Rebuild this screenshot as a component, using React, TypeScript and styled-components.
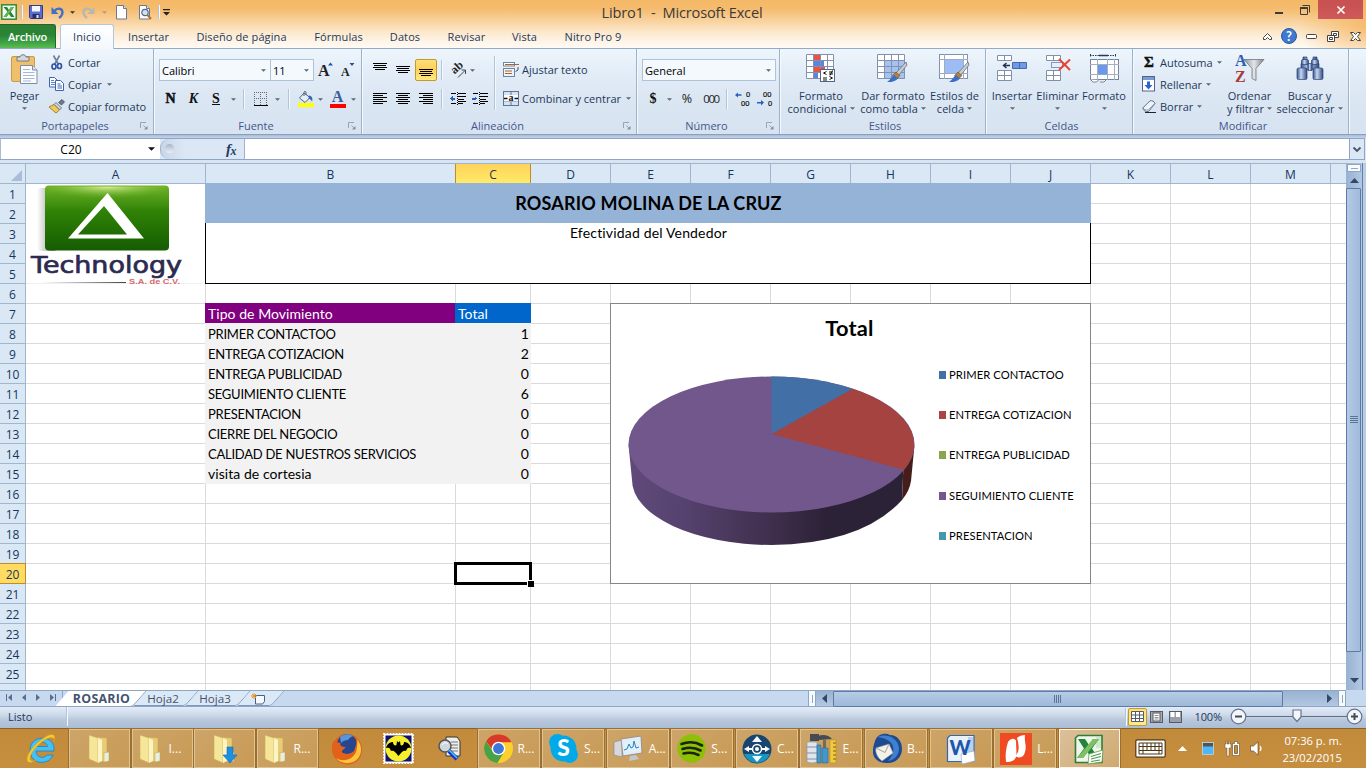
import React from "react";
import styled, { createGlobalStyle, css } from "styled-components";

const ui = `"Open Sans", "Noto Sans", sans-serif`;
const cellFont = `Lato, "Open Sans", sans-serif`;

const GlobalStyle = createGlobalStyle`
  * { box-sizing: border-box; }
  body { margin: 0; overflow: hidden; background: #c8dbf0; }
  svg { display: block; flex: none; overflow: visible; }
`;

const Screen = styled.div`
  width: 1366px;
  height: 768px;
  display: flex;
  flex-direction: column;
  overflow: hidden;
  font: 11px/13px ${ui};
  color: #1e395b;
  cursor: default;
`;

/* ---------- window frame ---------- */
const Frame = styled.header`
  height: 49px;
  flex: none;
  display: flex;
  flex-direction: column;
  border-bottom: 1px solid #93aac6;
  background:
    radial-gradient(ellipse 70px 40px at 1366px 26px, rgba(245, 182, 98, 0.85), transparent),
    radial-gradient(ellipse 50px 34px at 0px 8px, rgba(245, 182, 98, 0.6), transparent),
    linear-gradient(#f4b866 0, #f5bc6f 9px, #f8d09a 20px, #fce8cc 32px, #fef7ee 44px, #fffaf4 48px);
`;
const TitleBar = styled.div`
  height: 25px;
  display: flex;
  align-items: flex-start;
`;
const QuickAccess = styled.div`
  width: 560px;
  height: 24px;
  display: flex;
  align-items: center;
`;
const Slot = styled.span<{ $w: number }>`
  width: ${(p) => p.$w}px;
  flex: none;
  display: flex;
  justify-content: center;
  align-items: center;
`;
const WindowTitle = styled.h1`
  width: 244px;
  margin: 0;
  padding-top: 1px;
  text-align: center;
  white-space: pre;
  font: 400 14.6px/22px ${ui};
  letter-spacing: -0.2px;
  color: #3d3a38;
`;
const WindowButtons = styled.div`
  margin-left: auto;
  margin-right: 3px;
  display: flex;
`;
const FrameButton = styled.div<{ $w: number; $close?: boolean }>`
  width: ${(p) => p.$w}px;
  height: 19px;
  display: flex;
  align-items: center;
  justify-content: center;
  background: ${(p) => (p.$close ? "linear-gradient(#c75050, #cf5a5a)" : "transparent")};
`;
const TabStrip = styled.nav`
  height: 24px;
  display: flex;
`;
const FileTab = styled.div`
  width: 56px;
  height: 24px;
  margin-right: 4px;
  border: 1px solid #1d6b2b;
  border-bottom: 0;
  border-left: 0;
  border-radius: 0 3px 0 0;
  text-align: center;
  line-height: 23px;
  font-weight: 600;
  letter-spacing: -0.15px;
  color: #fff;
  background: linear-gradient(#2d7f37, #2a8535 45%, #3fa145 75%, #5cbd52);
`;
const RibbonTab = styled.div<{ $w: number; $active?: boolean }>`
  width: ${(p) => p.$w}px;
  height: 24px;
  text-align: center;
  line-height: 25px;
  letter-spacing: 0.1px;
  ${(p) =>
    p.$active &&
    css`
      border: 1px solid #b7c6da;
      border-bottom: 0;
      border-radius: 3px 3px 0 0;
      line-height: 24px;
      background: linear-gradient(#fff, #f3f8fd);
      height: 25px;
    `}
`;
const TabTools = styled.div`
  margin-left: auto;
  width: 110px;
  display: flex;
`;

/* ---------- ribbon ---------- */
const Ribbon = styled.section`
  height: 86px;
  flex: none;
  display: flex;
  border-bottom: 1px solid #8ba0bc;
  background: linear-gradient(#eef5fc, #e2ecf7 30%, #dbe6f3 60%, #d7e3f1);
`;
const Group = styled.div<{ $w: number }>`
  width: ${(p) => p.$w}px;
  flex: none;
  display: flex;
  flex-direction: column;
  border-right: 1px solid #9fb2cb;
  box-shadow: 1px 0 0 #f4f9fe;
`;
const GroupBody = styled.div`
  height: 69px;
  display: flex;
`;
const GroupLabel = styled.div`
  height: 15px;
  display: flex;
  align-items: center;
  justify-content: space-between;
  padding-right: 5px;
  color: #44578a;
  &::before { content: ""; width: 10px; }
`;
const Column = styled.div<{ $top?: number; $left?: number }>`
  display: flex;
  flex-direction: column;
  padding-top: ${(p) => p.$top ?? 0}px;
  padding-left: ${(p) => p.$left ?? 0}px;
`;
const ToolRow = styled.div<{ $h: number }>`
  height: ${(p) => p.$h}px;
  display: flex;
  align-items: center;
`;
const SmallButton = styled.div`
  height: 22px;
  display: flex;
  align-items: center;
  gap: 3px;
  white-space: nowrap;
  svg + span { margin-right: 2px; }
`;
const BigButton = styled.div<{ $w: number }>`
  width: ${(p) => p.$w}px;
  padding-top: 5px;
  display: flex;
  flex-direction: column;
  align-items: center;
  text-align: center;
`;
const BigIcon = styled.div`
  height: 35px;
  display: flex;
  align-items: flex-start;
`;
const BigLine = styled.div`
  height: 13px;
  display: flex;
  align-items: center;
  gap: 3px;
  white-space: nowrap;
  letter-spacing: 0.05px;
`;
const Combo = styled.div<{ $w: number; $overlap?: boolean }>`
  width: ${(p) => p.$w}px;
  height: 22px;
  margin-left: ${(p) => (p.$overlap ? -1 : 0)}px;
  padding: 0 4px 0 2px;
  display: flex;
  align-items: center;
  justify-content: space-between;
  border: 1px solid #b0c1da;
  background: #f4f9fe;
  color: #000;
`;
const Divider = styled.i<{ $h: number }>`
  width: 2px;
  height: ${(p) => p.$h}px;
  border-left: 1px solid #b3c4d9;
  border-right: 1px solid #f5f9fd;
`;
const ActiveTool = styled.span`
  width: 22px;
  height: 22px;
  flex: none;
  padding-top: 6px;
  display: flex;
  align-items: center;
  justify-content: center;
  border: 1px solid #c29b29;
  border-radius: 2px;
  background: linear-gradient(#fddf7d, #fdd154 45%, #fee981);
`;
const Serif = styled.b<{ $size: number; $italic?: boolean; $underline?: boolean; $heavy?: boolean; $color?: string }>`
  font: ${(p) => (p.$italic ? "italic" : "normal")} bold ${(p) => p.$size}px/14px "Liberation Serif", serif;
  color: ${(p) => p.$color ?? "#111"};
  ${(p) => p.$heavy && css`-webkit-text-stroke: 0.5px #111;`}
  ${(p) => p.$underline && css`border-bottom: 1px solid #111; line-height: 11px;`}
`;
const Swatch = styled.span<{ $color: string }>`
  width: 16px;
  display: flex;
  flex-direction: column;
  align-items: center;
  border-bottom: 4px solid ${(p) => p.$color};
`;
const Digits = styled.span<{ $tight?: boolean }>`
  font: ${(p) => (p.$tight ? "11.5px" : "12.5px")}/14px ${ui};
  letter-spacing: ${(p) => (p.$tight ? "-1.4px" : "0")};
  color: #222;
`;

/* ---------- formula bar ---------- */
const FormulaBar = styled.div`
  height: 28px;
  flex: none;
  padding-top: 3px;
  display: flex;
  align-items: stretch;
  border-bottom: 3px solid #d9e4f3;
  background: linear-gradient(#a9bbd6, #c6d4e8 3px, #dde8f5 3px);
`;
const BarInner = styled.div`
  width: 1349px;
  display: flex;
  border-top: 1px solid #8ea6c5;
  border-bottom: 1px solid #8ea6c5;
`;
const NameBox = styled.div`
  width: 160px;
  padding: 0 5px 0 1px;
  display: flex;
  align-items: center;
  background: #fff;
  border-left: 1px solid #a9bdd9;
  color: #000;
  svg { margin-left: auto; }
  span { width: 138px; padding-top: 1px; text-align: center; font-size: 12px; }
`;
const FxArea = styled.div`
  width: 85px;
  display: flex;
  align-items: center;
  border: solid #9fb3cf;
  border-width: 0 1px;
  border-radius: 9px 0 0 9px;
  background: linear-gradient(90deg, #c9d6e8, #dce7f5 24px);
  i { width: 9px; height: 9px; margin: 0 0 2px 4px; border-radius: 50%; background: linear-gradient(#a7b5c8, #e9f0f8); }
  b { margin-left: 52px; font: italic bold 15px/16px "Liberation Serif", serif; color: #243b63; letter-spacing: -0.5px; }
  sub { font-size: 12px; line-height: 0; vertical-align: -1px; }
`;
const FormulaInput = styled.div`
  flex: 1;
  background: #fff;
`;
const ExpandButton = styled.div`
  width: 16px;
  margin-right: 1px;
  display: flex;
  align-items: center;
  justify-content: center;
  border: 1px solid #8ea6c5;
  background: #dbe7f4;
`;

/* ---------- sheet ---------- */
const Workspace = styled.main`
  height: 527px;
  flex: none;
  display: flex;
  background: #b9cbe2;
`;
const columns = "26px 180px 250px 75px repeat(10, 80px) 80px";
const Sheet = styled.div`
  width: 1346px;
  height: 527px;
  overflow: hidden;
  display: grid;
  grid-template-columns: ${columns};
  grid-template-rows: repeat(27, 20px);
  background: #fff;
  border-top: 1px solid #9eb6ce;
`;
const Head = styled.div<{ $active?: boolean; $row?: boolean; $area: string }>`
  grid-area: ${(p) => p.$area};
  display: flex;
  align-items: center;
  justify-content: center;
  padding-top: 2px;
  font: 12px/14px ${ui};
  color: #16365c;
  background: ${(p) => (p.$active ? (p.$row ? "#ffdc61" : "linear-gradient(#ffd35a, #ffea68)") : "#dae7f5")};
  border: solid ${(p) => (p.$active ? "#c28a2b" : "#9eb6ce")};
  border-width: 0 1px 1px 0;
  ${(p) => p.$active && !p.$row && css`margin-left: -1px; border-left-width: 1px; margin-top: -1px; border-top-width: 1px;`}
  ${(p) => p.$active && p.$row && css`margin-top: -1px; border-top-width: 1px;`}
  ${(p) => p.$row && css`line-height: 13px;`}
  svg { margin: 0 0 -1px 7px; }
`;
const Cell = styled.div<{ $area: string }>`
  grid-area: ${(p) => p.$area};
  border: solid #d9dadb;
  border-width: 0 1px 1px 0;
`;
const Filled = styled.div<{ $area: string; $bg: string; $color?: string; $right?: boolean; $caps?: boolean }>`
  grid-area: ${(p) => p.$area};
  margin: -1px 0 0 -1px;
  padding: 2px 2px 0 3px;
  white-space: nowrap;
  overflow: hidden;
  font: ${(p) => (p.$caps ? "13px" : "14px")}/18px ${cellFont};
  letter-spacing: ${(p) => (p.$caps ? "-0.25px" : "0.05px")};
  color: ${(p) => p.$color ?? "#000"};
  background: ${(p) => p.$bg};
  text-align: ${(p) => (p.$right ? "right" : "left")};
`;
const Banner = styled(Filled)`
  display: flex;
  align-items: center;
  justify-content: center;
  margin-bottom: 1px;
  padding-top: 0;
  font: bold 18px/24px ${cellFont};
  letter-spacing: 0.18px;
`;
const SubBanner = styled(Filled)`
  border: 1px solid #000;
  border-top: 0;
  padding-top: 1px;
  text-align: center;
  font-size: 14px;
  letter-spacing: 0.17px;
`;
const LogoCell = styled.div`
  grid-area: 2 / 2 / 7 / 3;
  background: #fff;
  border-right: 1px solid #d9dadb;
  border-bottom: 1px solid #eef0f2;
  padding-left: 2px;
`;
const Selection = styled.div`
  grid-area: 21 / 4;
  margin: -2px -1px -1px -2px;
  border: 3px solid #000;
  position: relative;
  &::after {
    content: "";
    position: absolute;
    right: -5px;
    bottom: -5px;
    width: 6px;
    height: 6px;
    border: solid #fff;
    border-width: 1px 0 0 1px;
    background: #000;
  }
`;
const ChartBox = styled.figure`
  grid-area: 8 / 6 / 22 / 12;
  margin: -1px 0 0 -1px;
  border: 1px solid #868686;
  background: #fff;
  display: flex;
  flex-direction: column;
`;
const ChartTitle = styled.figcaption`
  height: 50px;
  padding: 11px 2px 0 0;
  text-align: center;
  font: bold 21.8px/26px ${cellFont};
  letter-spacing: 0.2px;
  color: #000;
`;
const ChartContent = styled.div`
  display: flex;
`;
const Legend = styled.ul`
  margin: 0;
  padding: 1px 0 0 17px;
  list-style: none;
`;
const LegendItem = styled.li<{ $color: string }>`
  height: 40.2px;
  display: flex;
  align-items: center;
  gap: 3px;
  white-space: nowrap;
  font: 11.2px/14px ${cellFont};
  letter-spacing: 0.1px;
  color: #000;
  &::before { content: ""; width: 7px; height: 8px; background: ${(p) => p.$color}; }
`;

const VScroll = styled.div`
  width: 17px;
  border-right: 1px solid #5f80ab;
  display: flex;
  flex-direction: column;
  background: linear-gradient(90deg, #98b2d2, #b3c8e2);
`;
const SplitBox = styled.div`
  height: 8px;
  margin: 1px 1px 0;
  border: 1px solid #8ea6c5;
  background: #f8fbfe;
  display: flex;
  align-items: center;
  justify-content: center;
  &::after { content: ""; width: 7px; height: 1px; background: #8ea6c5; }
`;
const ScrollArrow = styled.div<{ $w: number; $h: number }>`
  width: ${(p) => p.$w}px;
  height: ${(p) => p.$h}px;
  flex: none;
  display: flex;
  align-items: center;
  justify-content: center;
`;
const Thumb = styled.div<{ $vertical?: boolean }>`
  display: flex;
  align-items: center;
  justify-content: center;
  border: 1px solid #5d7ca5;
  ${(p) =>
    p.$vertical
      ? css`height: 464px; width: 15px; border-radius: 1px; background: linear-gradient(90deg, #b3cae5, #a1bbdb);`
      : css`width: 450px; height: 16px; border-radius: 1px; background: linear-gradient(#b5cbe6, #9fb9d9);`}
`;
const EdgeStrip = styled.div`
  width: 3px;
  background: #bccce4;
`;

/* ---------- sheet tabs ---------- */
const BottomBar = styled.div`
  height: 17px;
  flex: none;
  display: flex;
  align-items: stretch;
  border-bottom: 1px solid #8ea6c5;
  background: #c6d9ee;
`;
const TabNav = styled.div`
  width: 63px;
  display: flex;
  align-items: center;
  justify-content: space-around;
  padding: 0 1px 2px 1px;
  border: solid #8ea6c5;
  border-width: 1px 1px 0 0;
`;
const SheetTabs = styled.div`
  width: 745px;
  display: flex;
  border-top: 1px solid #8ea6c5;
`;
const SheetTab = styled.div<{ $w: number; $active?: boolean }>`
  position: relative;
  z-index: ${(p) => (p.$active ? 2 : 1)};
  width: ${(p) => p.$w}px;
  height: 15px;
  padding-right: ${(p) => (p.$active ? 0 : 6)}px;
  display: flex;
  align-items: center;
  justify-content: center;
  font: ${(p) => (p.$active ? "bold 12.4px" : "11.6px")}/15px ${ui};
  letter-spacing: ${(p) => (p.$active ? "0.25px" : "0")};
  color: #44546f;
  &::before {
    content: "";
    position: absolute;
    z-index: -1;
    inset: 0 ${(p) => (p.$active ? "0 0 -1px" : "0 0 0")};
    border-right: 1px solid #6f8cb0;
    border-bottom: ${(p) => (p.$active ? "0" : "1px solid #7f99bb")};
    border-radius: 0 0 3px 0;
    transform: skewX(-41deg);
    background: ${(p) => (p.$active ? "#fff" : "#dbe8f6")};
  }
`;
const HSplit = styled.div`
  width: 8px;
  border: 1px solid #8ea6c5;
  border-width: 1px 1px 0 1px;
  background: #f8fbfe;
  display: flex;
  align-items: center;
  justify-content: center;
  &::after { content: ""; width: 1px; height: 8px; background: #8ea6c5; }
`;
const HScroll = styled.div`
  width: 522px;
  display: flex;
  border-top: 1px solid #8ea6c5;
  background: linear-gradient(#98b2d2, #b3c8e2);
`;

/* ---------- status bar ---------- */
const StatusBar = styled.div`
  height: 21px;
  flex: none;
  display: flex;
  align-items: flex-start;
  background: linear-gradient(#e3ecf7, #cfdbeb 35%, #b9c8dc 60%, #aabdd6);
`;
const StatusText = styled.div`
  width: 66px;
  padding-left: 8px;
  line-height: 19px;
`;
const StatusTools = styled.div`
  margin-left: auto;
  display: flex;
  align-items: center;
  height: 19px;
`;
const ViewButton = styled.span<{ $active?: boolean }>`
  width: 19px;
  height: 18px;
  display: flex;
  align-items: center;
  justify-content: center;
  border-radius: 2px;
  ${(p) => p.$active && css`border: 1px solid #c29b29; background: linear-gradient(#fddf7d, #feeb94);`}
`;
const ZoomText = styled.span`
  width: 37px;
  text-align: right;
  margin-right: 8px;
  letter-spacing: -0.1px;
`;

/* ---------- taskbar ---------- */
const Taskbar = styled.footer`
  height: 40px;
  flex: none;
  display: flex;
  align-items: center;
  border-top: 1px solid #8b6127;
  color: #fff;
  background:
    radial-gradient(circle at 560px 20px, rgba(255, 230, 190, 0.12), transparent 90px),
    linear-gradient(#c28b3c, #c68f40);
`;
const TaskItem = styled.div<{ $w: number; $framed?: boolean; $active?: boolean; $gap?: number; $wide?: boolean }>`
  width: ${(p) => p.$w}px;
  height: 39px;
  flex: none;
  margin-right: ${(p) => p.$gap ?? 0}px;
  display: flex;
  align-items: center;
  justify-content: ${(p) => (p.$wide ? "flex-start" : "center")};
  gap: 5px;
  padding-left: ${(p) => (p.$wide ? 5 : 0)}px;
  font: 12px/16px ${ui};
  ${(p) =>
    p.$framed &&
    css`
      border: 1px solid ${p.$active ? "#fdf6ea" : "#dfc393"};
      box-shadow: 0 0 0 1px #9a6f30;
      background: ${p.$active ? "linear-gradient(135deg, #dcc09a, #cfa970)" : "linear-gradient(135deg, #cda569, #c89a55)"};
    `}
`;
const TaskBlank = styled.span`
  width: 8px;
`;
const Tray = styled.div`
  flex: 1;
  display: flex;
  align-items: center;
  padding-left: 15px;
`;
const Clock = styled.div`
  margin-left: 17px;
  width: 60px;
  display: flex;
  flex-direction: column;
  align-items: flex-end;
  font: 11.2px/17px ${ui};
`;

/* ---------- glyphs ---------- */
const Arrow = ({ c = "#5b6675", w = 5 }: { c?: string; w?: number }) => (
  <svg width={w} height={(w + 1) / 2} viewBox="0 0 6 3"><path d="M0 0h6L3 3z" fill={c} /></svg>
);
const Launcher = () => (
  <svg width="8" height="8" viewBox="0 0 8 8" fill="none" stroke="#98a5b8"><path d="M.5 6V.5H6" /><path d="M3.500 3.500l2.500 2.500" /><path d="M4 7.500h3.500V4z" fill="#7f8ea5" stroke="none" /></svg>
);
const bars = (rows: number[][], h = 12) => (
  <svg width="14" height={h} viewBox={`0 0 14 ${h}`} fill="#000" shapeRendering="crispEdges">
    {rows.map(([x, w], i) => <rect key={i} x={x} y={i * 2} width={w} height="1" />)}
  </svg>
);
const topBars = [[0, 14], [1, 12], [0, 14], [2, 10]];

const ExcelLogo = ({ s = 16 }: { s?: number }) => (
  <svg width={s} height={s} viewBox="0 0 30 30">
    <path d="M4 1.500h24v27H1.500V4z" fill="#eef7ea" stroke="#2f7d3a" strokeWidth="1.600" />
    <path d="M22 3h5v11H22z" fill="#cfe8c8" />
    <path d="M4 5h7l4 6 4-6h6l-7 9.500L24 24h-7l-3.500-6L9 24H3l7-9.500z" fill="#23843a" />
    <path d="M19 5h6L9 24H3z" fill="#7cc164" />
    <path d="M15 20l14-4-1 12-14 2z" fill="#fff" stroke="#5c9a4f" strokeWidth=".8" />
    <path d="M17 22.500l10-3M17 25l10-2.500M17 27.500l9-1.500" stroke="#4f9b4c" strokeWidth="1.200" />
  </svg>
);
const SmallExcelLogo = () => (
  <svg width="16" height="16" viewBox="0 0 16 16">
    <rect x=".8" y=".8" width="14.400" height="14.400" fill="#f3faf0" stroke="#2c8a3b" strokeWidth="1.500" />
    <path d="M2.500 3h3.500l2 3 2-3h3L9.800 7.700 13.500 13H10L7.800 9.800 5.500 13h-3l4-5.300z" fill="#23843a" />
    <path d="M10 3h3L5.500 13h-3z" fill="#63b450" />
  </svg>
);
const SaveIcon = () => (
  <svg width="14" height="14" viewBox="0 0 14 14"><path d="M.5.500h13v13H1.500l-1-1z" fill="#5a6cd0" stroke="#2e3d92" /><path d="M3 1h8v5.500H3z" fill="#f4f7fd" /><path d="M3.500 9h7v4.500h-7z" fill="#27306b" /><path d="M7.500 10h2v3h-2z" fill="#e8ecf8" /></svg>
);
const UndoIcon = ({ c, flip }: { c: string; flip?: boolean }) => (
  <svg width="13" height="13" viewBox="0 0 13 13"><g transform={flip ? "translate(13 0) scale(-1 1)" : undefined}><path d="M3.500 5C6 1.500 11.500 2 11.500 6.500c0 2.500-1.500 4-3.500 5.500" fill="none" stroke={c} strokeWidth="2.300" /><path d="M.5 1v7h7z" fill={c} /></g></svg>
);
const PageIcon = ({ lens }: { lens?: boolean }) => (
  <svg width="14" height="15" viewBox="0 0 14 15"><path d="M1.500.500h7l3 3v10.500h-10z" fill="#fff" stroke="#6b7893" /><path d="M8.500.500v3h3" fill="#dfe7f3" stroke="#6b7893" />
    {lens && <><circle cx="7" cy="7.500" r="3.200" fill="#cfe3f5" stroke="#5a6b86" strokeWidth="1.200" /><path d="M9.500 10l3.500 4" stroke="#b5762a" strokeWidth="2" /></>}
  </svg>
);
const PasteIcon = () => (
  <svg width="28" height="31" viewBox="0 0 28 31"><rect x=".5" y="2.500" width="23" height="25" rx="1.500" fill="#efc069" stroke="#c99c4e" /><path d="M6 3h3c0-3 6-3 6 0h3v4H6z" fill="#d4d7dd" stroke="#757b86" /><path d="M9.500 11.500h12l4.500 4.500v13.500H9.500z" fill="#fbfcff" stroke="#7d8ba5" /><path d="M21.500 11.500V16H26" fill="#dfe5f0" stroke="#7d8ba5" /><path d="M12 15.500h7M12 18.500h11.500M12 21.500h11.500M12 24.500h11.500M12 27h8" stroke="#a9b6d0" /></svg>
);
const CutIcon = () => (
  <svg width="16" height="15" viewBox="0 0 15 15" fill="none"><path d="M4 .5l5 9M10 .5l-5 9" stroke="#6c7f9e" strokeWidth="1.600" /><ellipse cx="4.500" cy="11.500" rx="2" ry="2.500" stroke="#3152a8" strokeWidth="1.700" /><ellipse cx="10" cy="11" rx="2" ry="2.500" stroke="#3152a8" strokeWidth="1.700" /></svg>
);
const CopyIcon = () => (
  <svg width="16" height="14" viewBox="0 0 16 14" stroke="#3a64b4"><path d="M.5.500h5l3 3v6.500h-8z" fill="#fff" /><path d="M2 3.500h3M2 5.500h4M2 7.500h4" strokeWidth=".8" /><path d="M6.500 3.500h5l3 3v7h-8z" fill="#fff" /><path d="M8.500 7h3M8.500 9h4.500M8.500 11h4.500" /></svg>
);
const BrushIcon = () => (
  <svg width="16" height="14" viewBox="0 0 16 14"><path d="M9.500 3.500L13 .5 15.500 3 12.500 6z" fill="#6d7b92" stroke="#36435c" strokeWidth=".7" /><path d="M7 3.500l5.500 5.500-2 2L5 5.500z" fill="#c9d1de" stroke="#4c5a74" strokeWidth=".7" /><path d="M5 5.500l5.500 5.500L7 14 0 8z" fill="#f2cb57" stroke="#8f6a1e" strokeWidth=".8" /></svg>
);
const SizeA = ({ up }: { up?: boolean }) => (
  <svg width="16" height="16" viewBox="0 0 16 16">
    <text x="0" y="14" fontFamily="Liberation Serif, serif" fontWeight="bold" fontSize={up ? 16 : 12} fill="#222">A</text>
    <path d={up ? "M10 3.500L12.500 .5l2.500 3z" : "M8.500 1h5L11 4z"} fill="#2a4f9c" />
  </svg>
);
const BorderIcon = () => (
  <svg width="14" height="14" viewBox="0 0 14 14" stroke="#667" shapeRendering="crispEdges"><path d="M.5 0v13M6.500 0v13M12.500 0v13M0 .5h13M0 6.500h13" strokeDasharray="1 1" /><path d="M0 13.500h14" stroke="#000" /></svg>
);
const BucketIcon = () => (
  <svg width="15" height="12" viewBox="0 0 15 12"><path d="M6 2l6 4.500-5 5L1.500 7z" fill="#e7edf7" stroke="#50617f" /><path d="M6 5V1.500C6 0 8 0 8 1.500V4" fill="none" stroke="#50617f" /><path d="M11 4.500c3 .5 4 3 3 6-1-2-2-2.500-3.500-3z" fill="#3464b8" /></svg>
);
const AbIcon = () => (
  <svg width="17" height="15" viewBox="0 0 17 15"><text transform="translate(4.500 11.500) rotate(-42)" fontFamily="Liberation Serif, serif" fontSize="12" fontWeight="bold" fill="#222">ab</text><path d="M8 14.500l7-7M15.500 11V7h-4" fill="none" stroke="#444" /></svg>
);
const IndentIcon = ({ right }: { right?: boolean }) => (
  <svg width="16" height="14" viewBox="0 0 16 14" shapeRendering="crispEdges"><path d="M1 1.500h5M8 1.500h8M8 4.500h8M8 7h6M8 9.500h8M1 11.500h5M8 11.500h5" stroke="#000" /><path d="M7 0v14" stroke="#000" strokeDasharray="1 1" /><path d={right ? "M5 6.500L2.500 4v2H0v1.500h2.500V9z" : "M0 6.500L2.500 4v2H5v1.500H2.500V9z"} fill="#2a5fc0" /></svg>
);
const WrapIcon = () => (
  <svg width="16" height="15" viewBox="0 0 16 15"><rect x=".5" y=".5" width="11" height="3.500" fill="#fff" stroke="#7183a1" /><path d="M2 2.500h14" stroke="#a8642a" /><rect x=".5" y="6.500" width="11" height="8" fill="#eef3fa" stroke="#7183a1" /><path d="M2 9h7M2 11.500h7" stroke="#a8642a" /><path d="M15 5v3l-2.500 1.500" fill="none" stroke="#38517d" /></svg>
);
const MergeIcon = () => (
  <svg width="16" height="15" viewBox="0 0 16 15"><rect x=".5" y=".5" width="15" height="14" fill="#d4e2f4" stroke="#5f7595" /><path d="M8 0v4M8 11v4M0 4.500h16M0 10.500h16" stroke="#5f7595" /><rect x="1" y="4" width="14" height="6.500" fill="#fff" /><text x="8" y="10" textAnchor="middle" fontFamily="Liberation Serif, serif" fontWeight="bold" fontSize="10" fill="#111">a</text><path d="M1 7.500h3.500M11.500 7.500H15" stroke="#111" strokeWidth="1.500" /></svg>
);
const DecimalIcon = ({ less }: { less?: boolean }) => (
  <svg width="16" height="14" viewBox="0 0 16 14" fontFamily="Liberation Sans, sans-serif" fontSize="7.500" fill="#111" stroke="#111" strokeWidth=".2"><text x={less ? 6 : 11} y="5">{less ? "00" : "0"}</text><text x={less ? 11 : 6} y="13.500">{less ? "0" : "00"}</text><path stroke="none" d={less ? "M7 10.500L4 8v2H0v1.500h4v2z" : "M0 3l3-2.500V2.200h3.500v1.600H3V5.500z"} fill="#2a5fc0" /></svg>
);
const gridLines = "M.5 .5h27v24H.5zM7.500 0v25M14.500 0v25M21.500 0v25M0 6.500h28M0 12.500h28M0 18.500h28";
const CondIcon = () => (
  <svg width="30" height="29" viewBox="0 0 30 29"><rect width="28" height="25" fill="#fff" /><path d="M7 0h7v6H7zM7 13h12v5H7z" fill="#ee5140" /><path d="M7 7h11v5H7zM7 19h5v6H7z" fill="#5b86e0" /><path d={gridLines} fill="none" stroke="#8392ac" /><rect x="14.500" y="15.500" width="14" height="12" fill="#fff" stroke="#54657f" /><path d="M20.500 17.500l-3 1.500 3 1.500M23 18h4M23 20h4M26.500 16.500l-2.500 5M17 24h4M17 26h4M23.500 22.500l3 1.500-3 1.500" fill="none" stroke="#111" /></svg>
);
const Paintbrush = () => (
  <g><path d="M29 8l-10 11 2.500 2.500L30 11z" fill="#c9ced6" stroke="#66707f" strokeWidth=".8" /><path d="M19 18l4 3.500-3.500 3.500-4-3.500z" fill="#b5813a" stroke="#6d4d20" strokeWidth=".6" /><path d="M17 21l4 3.500c-3 3-7 4-11 3.500 3-1.500 4-5 7-7z" fill="#3d6fc4" /></g>
);
const TableFmtIcon = () => (
  <svg width="32" height="29" viewBox="0 0 32 29"><rect width="28" height="25" fill="#fff" /><path d="M7 7h21v18H7z" fill="#a5c2f3" /><path d={gridLines} fill="none" stroke="#8392ac" /><Paintbrush /></svg>
);
const CellStyleIcon = () => (
  <svg width="32" height="29" viewBox="0 0 32 29"><rect x=".5" y=".5" width="28" height="24" fill="#fff" stroke="#8392ac" /><path d="M5.500 0v25M0 5.500h29M0 19.500h29M24.500 0v25" stroke="#9fabc0" /><rect x="6" y="6" width="18" height="13" fill="#9dbcf5" /><Paintbrush /></svg>
);
const InsertIcon = () => (
  <svg width="32" height="28" viewBox="0 0 32 28" stroke="#8190aa"><path d="M1.500 1.500h14v5h-14zM8.500 1.500v5M1.500 16.500h14v10h-14zM8.500 16.500v10M1.500 21.500h14" fill="#fff" /><path d="M16.500 8.500h14v6h-14zM23.500 8.500v6" fill="#6f9ae8" stroke="#4768ac" /><path d="M14 11.500H8M10.500 9l-3 2.500 3 2.500" fill="none" stroke="#1f2f4d" strokeWidth="1.400" /></svg>
);
const DeleteIcon = () => (
  <svg width="26" height="28" viewBox="0 0 26 28" stroke="#8190aa"><path d="M1.500 1.500h14v5h-14zM8.500 1.500v5M1.500 16.500h14v10h-14zM8.500 16.500v10M1.500 21.500h14" fill="#fff" /><path d="M6.500 8.500h11v5h-11z" fill="none" strokeDasharray="1 1" stroke="#24408a" /><path d="M14 5l11 11M25 5.500L14 16" stroke="#e8442f" strokeWidth="2" fill="none" /></svg>
);
const FormatIcon = () => (
  <svg width="31" height="30" viewBox="0 0 31 30"><path d="M1.500 0v3M26.500 0v3M1 1.500h26" stroke="#273a5e" strokeDasharray="1.500 1" /><path d="M10 1.500h9" stroke="#273a5e" strokeWidth="1.500" /><rect x="1.500" y="5.500" width="28" height="20" fill="#fff" stroke="#76849d" /><path d="M8.500 5v21M18.500 5v21M25.500 5v21M1 10.500h29M1 20.500h29" stroke="#a3afc3" /><rect x="9" y="11" width="9" height="9.500" fill="#6b98ec" /><path d="M1.500 25.500q2 4 6 2.500l2-2M11 28h4l2-2" fill="#fff" stroke="#76849d" /></svg>
);
const FillIcon = () => (
  <svg width="14" height="16" viewBox="0 0 14 16"><rect x=".5" y=".5" width="12" height="14.500" fill="#fff" stroke="#51658c" /><path d="M1 1h11v3H1z" fill="#7d9bd0" /><path d="M5 5.500h3V9h2.500l-4 4.500-4-4.500H5z" fill="#2c63cf" /></svg>
);
const EraserIcon = () => (
  <svg width="15" height="13" viewBox="0 0 15 13"><path d="M.8 8L8 .8c2-.5 4.500.7 5 2.700L6.500 11.500C4 12 1 10.500.8 8z" fill="#eef2f9" stroke="#5d6d8a" /><path d="M.8 8c1 1.500 3 2.300 5.500 2L13 3.500" fill="none" stroke="#8b98b0" /><path d="M3 12.500h11" stroke="#222" /></svg>
);
const SortIcon = () => (
  <svg width="30" height="30" viewBox="0 0 30 30" fontFamily="Liberation Serif, serif" fontWeight="bold" fontSize="16"><path d="M9 5.500h20l-8 9v12l-4-2v-10z" fill="url(#metal)" stroke="#70757c" strokeWidth=".8" /><text x="0" y="12" fill="#2c5cb5">A</text><text x="0" y="28" fill="#a93a3a">Z</text><defs><linearGradient id="metal"><stop offset="0" stopColor="#8f949b" /><stop offset=".5" stopColor="#e3e5e8" /><stop offset="1" stopColor="#7e838a" /></linearGradient></defs></svg>
);
const BinocularsIcon = () => (
  <svg width="28" height="27" viewBox="0 0 28 27"><defs><linearGradient id="bino"><stop offset="0" stopColor="#33518f" /><stop offset=".4" stopColor="#c7d7f0" /><stop offset="1" stopColor="#2f4980" /></linearGradient></defs><g transform="translate(0 1.500)" fill="url(#bino)" stroke="#2d4577" strokeWidth=".7"><path d="M5 8h7v6H5zM16 8h7v6h-7z" /><path d="M7 1.500h4v3H7zM17 1.500h4v3h-4z" /><rect x="5.500" y="4" width="7" height="5" rx="1.500" /><rect x="15.500" y="4" width="7" height="5" rx="1.500" /><path d="M12 8h4v7h-4z" /><rect x="1" y="12.500" width="10" height="11.500" rx="1.500" /><rect x="17" y="12.500" width="10" height="11.500" rx="1.500" /></g></svg>
);

const Dotted = ({ vertical }: { vertical?: boolean }) => (
  <svg width="8" height="8" viewBox="0 0 8 8" stroke="#5b7595" shapeRendering="crispEdges"><path d={vertical ? "M0 .5h8M0 2.500h8M0 4.500h8M0 6.500h8" : "M.5 0v8M2.500 0v8M4.500 0v8M6.500 0v8"} /></svg>
);
const Tri = ({ d, w = 5, h = 8, c = "#33476b" }: { d: string; w?: number; h?: number; c?: string }) => (
  <svg width={w} height={h} viewBox={`0 0 ${w} ${h}`}><path d={d} fill={c} /></svg>
);

const TechLogo = () => (
  <svg width="170" height="100" viewBox="0 0 170 100">
    <defs>
      <linearGradient id="lg" x1="0" y1="0" x2="0" y2="1"><stop offset="0" stopColor="#6fb327" /><stop offset=".4" stopColor="#2f8206" /><stop offset="1" stopColor="#155c02" /></linearGradient>
      <radialGradient id="gl" cx=".5" cy="0" r=".6"><stop offset="0" stopColor="#e4f5a6" stopOpacity=".95" /><stop offset="1" stopColor="#6fb327" stopOpacity="0" /></radialGradient>
      <linearGradient id="sh"><stop offset="0" stopColor="#555" stopOpacity="0" /><stop offset="1" stopColor="#444" /></linearGradient>
    </defs>
    <rect x="9" y="4" width="20" height="63" rx="4" fill="url(#sh)" opacity=".7" />
    <rect x="17" y="1.500" width="124" height="65" rx="4" fill="url(#lg)" />
    <path d="M20 2.500h118v12Q80 30 20 14z" fill="url(#gl)" />
    <path d="M79.500 9L116 54.500H40zM76 22L50 50.500h49z" fill="#fff" fillRule="evenodd" />
    <text x="3" y="89" textLength="151" lengthAdjust="spacingAndGlyphs" fontFamily="DejaVu Sans, sans-serif" fontSize="23" fill="#2c2a50" stroke="#2c2a50" strokeWidth=".7">Technology</text>
    <path d="M14 98h84v1H14z" fill="url(#sh)" />
    <text x="101" y="100" textLength="51" lengthAdjust="spacingAndGlyphs" fontFamily="Liberation Sans, sans-serif" fontSize="6.500" fontWeight="bold" fill="#d9686c">S.A. de C.V.</text>
  </svg>
);

const Pie = () => (
  <svg width="311" height="180" viewBox="611 354 311 180">
    <defs>
      <linearGradient id="side" gradientUnits="userSpaceOnUse" x1="629" y1="0" x2="903" y2="0"><stop offset="0" stopColor="#5f4a7a" /><stop offset=".2" stopColor="#56426e" /><stop offset=".5" stopColor="#41304f" /><stop offset=".72" stopColor="#2c2237" /><stop offset="1" stopColor="#2c2237" /></linearGradient>
    </defs>
    <path d="M628.500 444.500L632 480A139.500 65 0 0 0 771.500 545Q862 544 902 500L903.500 465z" fill="url(#side)" />
    <path d="M903.500 465L902 500Q909.500 491 911 481L914.500 445z" fill="#471d1b" />
    <ellipse cx="771.500" cy="444.500" rx="143" ry="68" fill="#71578c" />
    <path d="M771.500 434L852.500 388.800A143 68 0 0 1 904 469.700z" fill="#a54340" />
    <path d="M771.500 434V376.500A143 68 0 0 1 852.500 388.800z" fill="#426fa5" />
  </svg>
);

/* taskbar artwork */
const IeIcon = () => (
  <svg width="32" height="32" viewBox="0 0 32 32"><path d="M29 18H11c0 7 8 8 11 4h6c-4 11-23 10-23-5S28 1 29 15zM22.500 13.500c-1-6-11-6-11.500 0z" fill="#45c0f3" stroke="#1683c5" strokeWidth=".8" fillRule="evenodd" /><path d="M29 9c2-6 0-9-5-7C15 6 3 17 2 26c0 5 5 4 9 1-4 2-6 1-6-2C6 18 17 7 24 5c4-1 6 0 5 4z" fill="#f6c92f" stroke="#d99a12" strokeWidth=".5" /></svg>
);
const FolderIcon = ({ down }: { down?: boolean }) => (
  <svg width="26" height="30" viewBox="0 0 26 30"><path d="M9 3l11 1v24l-9-1z" fill="#e8cd76" stroke="#c4a350" strokeWidth=".6" /><path d="M2 1l9 3v25l-9-4z" fill="#f6e69a" stroke="#c9ab56" strokeWidth=".6" /><path d="M11 4l4 2v21l-4 2z" fill="#fdf4c4" /><path d="M17 19l5-1v9l-5 1z" fill="#e6f0e2" stroke="#c4a350" strokeWidth=".5" />
    {down && <path d="M15 13h6v8h4l-7 8-7-8h4z" fill="#1c8fe0" stroke="#0f6bb5" strokeWidth=".6" />}
  </svg>
);
const FirefoxIcon = () => (
  <svg width="32" height="32" viewBox="0 0 32 32"><circle cx="16" cy="16" r="15" fill="#e0631a" /><circle cx="16" cy="11" r="10" fill="#26478f" /><path d="M9 4c3-3 9-4 13-1-2 1-4 2-5 4-3 0-5 1-7 3z" fill="#5d94d8" /><path d="M2.500 8c2 2 4 1 7 2-1 3 1 4 5 4-1 3-5 3-3 6 3 4 9 3 12 0-1-5 3-8 2-14 7 6 7 16 1 22-8 6-18 4-23-4C1 19 0 13 2.500 8z" fill="#e2611b" /><path d="M26 6c7 9 4 18-2 22-7 4-15 2-19-3 8 5 17 1 20-6 1-4 2-9 1-13z" fill="#fbc63c" /></svg>
);
const BatIcon = () => (
  <svg width="31" height="31" viewBox="0 0 31 31"><rect x=".8" y=".8" width="29.400" height="29.400" fill="#fff" stroke="#fff" strokeWidth="1.500" strokeDasharray="1.500 1.500" /><rect x="2.500" y="2.500" width="26" height="26" fill="#11116e" /><circle cx="15.500" cy="15.500" r="13" fill="#f7ee2c" /><path d="M3 15c1-4 4-6 7-6 0 3 2 4 3.500 3L14 8l1.500 1.500L17 8l.5 4c1.500 1 3.500 0 3.500-3 3 0 6 2 7 6-3-1-4 0-5 3-2-1-4 0-7.500 5-3.500-5-5.500-6-7.500-5-1-3-2-4-5-3z" fill="#000" /></svg>
);
const SearchDocIcon = () => (
  <svg width="26" height="26" viewBox="0 0 26 26"><path d="M9 1h11l3 4v15H9z" fill="#eee" stroke="#333" /><path d="M14 6h7M14 9h7M14 12h7M14 15h7" stroke="#777" /><circle cx="8" cy="10" r="6" fill="#cfd6de" stroke="#555" strokeWidth="1.500" /><path d="M5 9q3-4 6-1" fill="none" stroke="#fff" /><path d="M12 15l8 8" stroke="#1a2fd0" strokeWidth="4" /><path d="M12 14l8 8" stroke="#37d9e8" strokeWidth="1.500" /></svg>
);
const ChromeIcon = () => (
  <svg width="29" height="29" viewBox="0 0 28 28"><circle cx="14" cy="14" r="14" fill="#fcd12c" /><path d="M1.900 7A14 14 0 0 1 26.500 8H14l-6 7z" fill="#d8392b" /><path d="M1.900 7A14 14 0 0 0 13 28l6-10-10-1z" fill="#4aa244" /><circle cx="14" cy="14" r="6.600" fill="#fff" /><circle cx="14" cy="14" r="5.200" fill="#3f78d4" /></svg>
);
const SkypeIcon = () => (
  <svg width="31" height="31" viewBox="0 0 30 30"><circle cx="15" cy="15" r="12.500" fill="#00a9ea" /><circle cx="9" cy="9" r="8" fill="#00a9ea" /><circle cx="21" cy="21" r="8" fill="#00a9ea" /><text x="15" y="22.500" textAnchor="middle" fontFamily="Lato, sans-serif" fontWeight="900" fontSize="22" fill="#fff">S</text></svg>
);
const MonitorIcon = () => (
  <svg width="31" height="28" viewBox="0 0 31 28"><path d="M1 7l8-2v17l-8-2z" fill="#d5d8dc" stroke="#888" strokeWidth=".6" /><path d="M8 4l20-3 1 17-19 3z" fill="#e7eaee" stroke="#888" strokeWidth=".8" /><path d="M10.500 6l15.500-2.500 1 12.500-15 2.500z" fill="#dff1fb" /><path d="M11 15l3-1 2-5 2 4 2-1 1-6 2 7 3-1" fill="none" stroke="#2f7fbd" /><path d="M17 21l6-1 3 4-10 2z" fill="#c3c7cc" /></svg>
);
const SpotifyIcon = () => (
  <svg width="29" height="29" viewBox="0 0 29 29"><circle cx="14.500" cy="14.500" r="14.200" fill="#8dc007" /><path d="M4.500 10q11-4 20.500 1.500M5.500 15q10-3 18 1.500M6.500 19.500q8-2 15 1.500" fill="none" stroke="#1b2406" strokeWidth="2.600" strokeLinecap="round" /></svg>
);
const CompassIcon = () => (
  <svg width="30" height="30" viewBox="0 0 30 30"><circle cx="15" cy="15" r="14.500" fill="#17456f" /><path d="M2 20a14 14 0 0 0 26 0z" fill="#1795c4" /><path d="M15 2l5 6H10zM15 28l5-6H10zM2 15l5-3v6zM28 15l-5-3v6z" fill="#f2f8fc" /><path d="M5 14h20v2H5z" fill="#fff" /><circle cx="15" cy="15" r="4.500" fill="#17456f" stroke="#fff" strokeWidth="1.500" /><circle cx="15" cy="15" r="2" fill="#fff" /></svg>
);
const ToolsIcon = () => (
  <svg width="31" height="31" viewBox="0 0 31 31"><path d="M1 9h10v20q-5 2-10 0z" fill="#dfe5ec" stroke="#8391a3" strokeWidth=".6" /><path d="M1 14h10M1 20h10M1 26h10" stroke="#8391a3" /><path d="M4 1h9v7H4zM12 3c5-2 11-1 14 3l-13 1z" fill="#454b54" /><path d="M17 7h3v8h-3z" fill="#7b6a50" /><path d="M11 12h4v18h-4zM16 15h6v15h-6z" fill="#4597c7" stroke="#286a96" strokeWidth=".6" /><path d="M24 7h6v23h-6z" fill="#f3cb3e" stroke="#b98f1e" strokeWidth=".6" /><path d="M27 10h3M27 14h3M27 18h3M27 22h3M27 26h3" stroke="#7c5f12" /></svg>
);
const ThunderbirdIcon = () => (
  <svg width="31" height="31" viewBox="0 0 31 31"><path d="M4 8C6 1 14-1 19 2c8 0 12 7 12 14 0 8-6 14-14 14C8 31 1 25 2 17c0-3 1-6 2-9z" fill="#1e4a94" /><path d="M7 4c7-4 20 0 21 11 0 8-5 12-11 13 5-5 7-11 4-17C18 7 13 5 7 4z" fill="#3f81cf" /><path d="M5 15l13-4 4 9-11 8c-4-3-7-8-6-13z" fill="#f2f1ea" stroke="#a5a396" strokeWidth=".6" /><path d="M5 15l9 4.500 4-8.500" fill="none" stroke="#a5a396" /></svg>
);
const WordIcon = () => (
  <svg width="30" height="30" viewBox="0 0 30 30"><path d="M4 1.500h24v26H1.500V4z" fill="#e9f1fb" stroke="#3567ae" strokeWidth="1.200" /><path d="M22 3h5v15h-5z" fill="#b9cfee" /><path d="M15 20l13-3 1 10-13 3z" fill="#fff" stroke="#8da8d3" strokeWidth=".6" /><text x="14" y="21" textAnchor="middle" fontFamily="Lato, sans-serif" fontWeight="900" fontSize="20" fill="#1d56ab">W</text></svg>
);
const NitroIcon = () => (
  <svg width="32" height="32" viewBox="0 0 32 32"><rect width="32" height="32" fill="#f04a22" /><path d="M6 29C5 22 6 15 8 9c3-4 7-4 8-1 0 6 1 12 0 16-1 3-4 5-10 5z" fill="#fff" /><path d="M17 5c2-2 5-3 8-3-1 6 2 11 0 17-1 5-5 7-10 4 5-4 4-11 2-18z" fill="#fff" /></svg>
);
const KeyboardIcon = () => (
  <svg width="31" height="19" viewBox="0 0 31 19"><rect x=".8" y=".8" width="29.400" height="17.400" rx="1.500" fill="#fff" stroke="#4c3614" strokeWidth="1.200" /><path d="M4 4h23v11H4zM4 7.500h23M4 11.500h23M8 4v11M12 4v7M16 4v7M20 4v7M24 4v11" fill="none" stroke="#4c3614" /></svg>
);

const TrayIcons = () => (
  <>
    <KeyboardIcon />
    <Slot $w={34}><Tri d="M4.500 0L9 5H0z" w={9} h={5} c="#fff" /></Slot>
    <Slot $w={17}><svg width="12" height="13" viewBox="0 0 12 13"><rect x=".5" y=".5" width="11" height="12" fill="#4cb8f7" stroke="#e9e2d5" strokeWidth=".6" /><rect x="1" y="1" width="10" height="3.500" fill="#4d5560" /></svg></Slot>
    <Slot $w={31}><svg width="15" height="15" viewBox="0 0 15 15" fill="#fff"><path d="M1 0h1v3h2V0h1v3h1v4H4v8H2V7H0V3h1z" stroke="#4c3614" strokeWidth=".4" /><path d="M7.500 2.500h2v-2h3v2h2v12h-7z" stroke="#4c3614" strokeWidth=".5" /><path d="M9.500 4.500h3v8h-3z" fill="#c38c3d" stroke="#4c3614" strokeWidth=".6" /></svg></Slot>
    <Slot $w={17}><svg width="13" height="15" viewBox="0 0 13 15"><path d="M.5 5h3L8 .8v13.400L3.500 10h-3z" fill="#fff" stroke="#4c3614" strokeWidth=".6" /><path d="M10 5q2 2.500 0 5" fill="none" stroke="#fff" strokeWidth="1.200" /></svg></Slot>
  </>
);

/* ---------- data ---------- */
const colNames = "ABCDEFGHIJKLM".split("");
const rowNumbers = Array.from({ length: 25 }, (_, i) => i + 1);
const movements: [string, number][] = [
  ["PRIMER CONTACTOO", 1],
  ["ENTREGA COTIZACION", 2],
  ["ENTREGA PUBLICIDAD", 0],
  ["SEGUIMIENTO CLIENTE", 6],
  ["PRESENTACION", 0],
  ["CIERRE DEL NEGOCIO", 0],
  ["CALIDAD DE NUESTROS SERVICIOS", 0],
  ["visita de cortesia", 0],
];
const legend: [string, string][] = [
  ["PRIMER CONTACTOO", "#426fa5"],
  ["ENTREGA COTIZACION", "#a94643"],
  ["ENTREGA PUBLICIDAD", "#89a54e"],
  ["SEGUIMIENTO CLIENTE", "#71588f"],
  ["PRESENTACION", "#4198af"],
];
const ribbonTabs: [string, number][] = [
  ["Insertar", 69], ["Diseño de página", 117], ["Fórmulas", 77], ["Datos", 56], ["Revisar", 67], ["Vista", 49], ["Nitro Pro 9", 88],
];

const Big = ({ w, icon, l1, l2 }: { w: number; icon: React.ReactNode; l1: string; l2?: string }) => (
  <BigButton $w={w}>
    <BigIcon>{icon}</BigIcon>
    <BigLine>{l1}</BigLine>
    <BigLine>{l2 && <span>{l2}</span>}<Arrow /></BigLine>
  </BigButton>
);
const Label = ({ children, plain }: { children: string; plain?: boolean }) => (
  <GroupLabel><span>{children}</span>{plain ? <i /> : <Launcher />}</GroupLabel>
);

function RibbonArea() {
  return (
    <Ribbon>
      <Group $w={154}>
        <GroupBody>
          <Big w={49} icon={<PasteIcon />} l1="Pegar" />
          <Column $top={2}>
            <SmallButton><CutIcon /><span>Cortar</span></SmallButton>
            <SmallButton><CopyIcon /><span>Copiar</span><Arrow /></SmallButton>
            <SmallButton><BrushIcon /><span>Copiar formato</span></SmallButton>
          </Column>
        </GroupBody>
        <Label>Portapapeles</Label>
      </Group>
      <Group $w={208}>
        <GroupBody>
          <Column $top={10} $left={5}>
            <ToolRow $h={22}>
              <Combo $w={112}>Calibri<Arrow /></Combo>
              <Combo $w={44} $overlap>11<Arrow /></Combo>
              <Slot $w={24}><SizeA up /></Slot>
              <Slot $w={22}><SizeA /></Slot>
            </ToolRow>
            <ToolRow $h={36}>
              <Slot $w={23}><Serif $size={14} $heavy>N</Serif></Slot>
              <Slot $w={23}><Serif $size={14} $italic>K</Serif></Slot>
              <Slot $w={22}><Serif $size={14} $underline>S</Serif></Slot>
              <Slot $w={12}><Arrow /></Slot>
              <Slot $w={9}><Divider $h={20} /></Slot>
              <Slot $w={25}><BorderIcon /></Slot>
              <Slot $w={8}><Arrow /></Slot>
              <Slot $w={15}><Divider $h={20} /></Slot>
              <Slot $w={19}><Swatch $color="#ffff00"><BucketIcon /></Swatch></Slot>
              <Slot $w={10}><Arrow /></Slot>
              <Slot $w={25}><Swatch $color="#f00"><Serif $size={16} $color="#3a5c9c">A</Serif></Swatch></Slot>
              <Slot $w={6}><Arrow /></Slot>
            </ToolRow>
          </Column>
        </GroupBody>
        <Label>Fuente</Label>
      </Group>
      <Group $w={275}>
        <GroupBody>
          <Column $top={10} $left={7}>
            <ToolRow $h={22}>
              <Slot $w={22}>{bars(topBars, 14)}</Slot>
              <Slot $w={23}>{bars(topBars, 8)}</Slot>
              <Slot $w={23}><ActiveTool>{bars(topBars, 8)}</ActiveTool></Slot>
              <Slot $w={9}><Divider $h={20} /></Slot>
              <Slot $w={24}><AbIcon /></Slot>
              <Arrow />
            </ToolRow>
            <ToolRow $h={36}>
              <Slot $w={22}>{bars([[0, 14], [0, 10], [0, 14], [0, 10], [0, 14], [0, 10]])}</Slot>
              <Slot $w={24}>{bars([[0, 14], [2, 10], [0, 14], [2, 10], [0, 14], [2, 10]])}</Slot>
              <Slot $w={22}>{bars([[0, 14], [4, 10], [0, 14], [4, 10], [0, 14], [4, 10]])}</Slot>
              <Slot $w={9}><Divider $h={20} /></Slot>
              <Slot $w={23}><IndentIcon /></Slot>
              <Slot $w={22}><IndentIcon right /></Slot>
            </ToolRow>
          </Column>
          <Column $top={7} $left={3}><Divider $h={54} /></Column>
          <Column $top={9} $left={7}>
            <SmallButton><WrapIcon /><span>Ajustar texto</span></SmallButton>
            <ToolRow $h={36}><SmallButton><MergeIcon /><span>Combinar y centrar</span><Arrow /></SmallButton></ToolRow>
          </Column>
        </GroupBody>
        <Label>Alineación</Label>
      </Group>
      <Group $w={143}>
        <GroupBody>
          <Column $top={10} $left={5}>
            <Combo $w={134}>General<Arrow /></Combo>
            <ToolRow $h={36}>
              <Slot $w={22}><Serif $size={14}>$</Serif></Slot>
              <Slot $w={11}><Arrow /></Slot>
              <Slot $w={24}><Digits>%</Digits></Slot>
              <Slot $w={24}><Digits $tight>000</Digits></Slot>
              <Slot $w={8}><Divider $h={20} /></Slot>
              <Slot $w={24}><DecimalIcon /></Slot>
              <Slot $w={20}><DecimalIcon less /></Slot>
            </ToolRow>
          </Column>
        </GroupBody>
        <Label>Número</Label>
      </Group>
      <Group $w={206}>
        <GroupBody>
          <Big w={82} icon={<CondIcon />} l1="Formato" l2="condicional" />
          <Big w={62} icon={<TableFmtIcon />} l1="Dar formato" l2="como tabla" />
          <Big w={61} icon={<CellStyleIcon />} l1="Estilos de" l2="celda" />
        </GroupBody>
        <Label plain>Estilos</Label>
      </Group>
      <Group $w={147}>
        <GroupBody>
          <Big w={52} icon={<InsertIcon />} l1="Insertar" />
          <Big w={39} icon={<DeleteIcon />} l1="Eliminar" />
          <Big w={54} icon={<FormatIcon />} l1="Formato" />
        </GroupBody>
        <Label plain>Celdas</Label>
      </Group>
      <Group $w={216}>
        <GroupBody>
          <Column $top={2} $left={8}>
            <SmallButton><Slot $w={16}><Serif $size={15} $heavy>Σ</Serif></Slot><span>Autosuma</span><Slot $w={8}><Arrow /></Slot></SmallButton>
            <SmallButton><Slot $w={16}><FillIcon /></Slot><span>Rellenar</span><Slot $w={6}><Arrow /></Slot></SmallButton>
            <SmallButton><Slot $w={16}><EraserIcon /></Slot><span>Borrar</span><Slot $w={6}><Arrow /></Slot></SmallButton>
          </Column>
          <Big w={52} icon={<SortIcon />} l1="Ordenar" l2="y filtrar" />
          <Big w={68} icon={<BinocularsIcon />} l1="Buscar y" l2="seleccionar" />
        </GroupBody>
        <Label plain>Modificar</Label>
      </Group>
    </Ribbon>
  );
}

function Grid() {
  return (
    <Sheet>
      <Head $area="1 / 1"><svg width="11" height="11" viewBox="0 0 11 11"><path d="M11 0v11H0z" fill="#a9bddb" /></svg></Head>
      {colNames.map((n, i) => <Head key={n} $area={`1 / ${i + 2}`} $active={n === "C"}>{n}</Head>)}
      <Head $area="1 / 15" />
      {rowNumbers.map((n) => <Head key={n} $area={`${n + 1} / 1`} $row $active={n === 20}>{n}</Head>)}
      <Head $area="27 / 1" $row />
      {Array.from({ length: 26 * 14 }, (_, i) => (
        <Cell key={i} $area={`${Math.floor(i / 14) + 2} / ${(i % 14) + 2}`} />
      ))}
      <LogoCell><TechLogo /></LogoCell>
      <Banner $area="2 / 3 / 4 / 12" $bg="#95b3d7">ROSARIO MOLINA DE LA CRUZ</Banner>
      <SubBanner $area="4 / 3 / 7 / 12" $bg="#fff">Efectividad del Vendedor</SubBanner>
      <Filled $area="8 / 3" $bg="#800080" $color="#fff">Tipo de Movimiento</Filled>
      <Filled $area="8 / 4" $bg="#0066cc" $color="#fff">Total</Filled>
      {movements.map(([name, total], i) => (
        <React.Fragment key={name}>
          <Filled $area={`${i + 9} / 3`} $bg="#f2f2f2" $caps={name !== "visita de cortesia"}>{name}</Filled>
          <Filled $area={`${i + 9} / 4`} $bg="#f2f2f2" $right>{total}</Filled>
        </React.Fragment>
      ))}
      <Selection />
      <ChartBox>
        <ChartTitle>Total</ChartTitle>
        <ChartContent>
          <Pie />
          <Legend>{legend.map(([t, c]) => <LegendItem key={t} $color={c}>{t}</LegendItem>)}</Legend>
        </ChartContent>
      </ChartBox>
    </Sheet>
  );
}

export default function App() {
  return (
    <Screen>
      <GlobalStyle />
      <Frame>
        <TitleBar>
          <QuickAccess>
            <Slot $w={18}><SmallExcelLogo /></Slot>
            <Slot $w={7}><Divider $h={14} /></Slot>
            <Slot $w={22}><SaveIcon /></Slot>
            <Slot $w={21}><UndoIcon c="#3f6fc6" /></Slot>
            <Slot $w={9}><Arrow c="#333" /></Slot>
            <Slot $w={23}><UndoIcon c="#b8b5b2" flip /></Slot>
            <Slot $w={9}><Arrow c="#b49a78" /></Slot>
            <Slot $w={25}><PageIcon /></Slot>
            <Slot $w={21}><PageIcon lens /></Slot>
            <Slot $w={7}><Divider $h={14} /></Slot>
            <Slot $w={9}><svg width="7" height="7" viewBox="0 0 7 7"><path d="M0 0h7v1.300H0zM0 3h7L3.500 6.500z" fill="#222" /></svg></Slot>
          </QuickAccess>
          <WindowTitle>{"Libro1  -  Microsoft Excel"}</WindowTitle>
          <WindowButtons>
            <FrameButton $w={27}><svg width="8" height="10" viewBox="0 0 8 10"><path d="M0 8h8" stroke="#3c3c3c" strokeWidth="2" /></svg></FrameButton>
            <FrameButton $w={26}><svg width="10" height="10" viewBox="0 0 10 10" fill="none" stroke="#3c3c3c"><path d="M.5 2.500h7v7h-7z" /><path d="M.5 3h7" strokeWidth="2" /><path d="M2.500 .5h7v7" /></svg></FrameButton>
            <FrameButton $w={45} $close><svg width="8" height="8" viewBox="0 0 8 8"><path d="M.5.500l7 7M7.500.500l-7 7" stroke="#fff" strokeWidth="1.700" /></svg></FrameButton>
          </WindowButtons>
        </TitleBar>
        <TabStrip>
          <FileTab>Archivo</FileTab>
          <RibbonTab $w={54} $active>Inicio</RibbonTab>
          {ribbonTabs.map(([t, w]) => <RibbonTab key={t} $w={w}>{t}</RibbonTab>)}
          <TabTools>
            <Slot $w={22}><svg width="9" height="7" viewBox="0 0 9 7"><path d="M.5 4.500l4-4 4 4v2h-2l-2-2-2 2h-2z" fill="#fff" stroke="#444" /></svg></Slot>
            <Slot $w={22}><svg width="16" height="16" viewBox="0 0 16 16"><circle cx="8" cy="8" r="7.500" fill="#3f7ad0" stroke="#2758a8" /><text x="8" y="12.500" textAnchor="middle" fontFamily="Lato, sans-serif" fontWeight="bold" fontSize="13" fill="#fff">?</text></svg></Slot>
            <Slot $w={22}><svg width="11" height="5" viewBox="0 0 11 5"><rect x=".5" y=".5" width="10" height="4" rx="1" fill="#fff" stroke="#444" /></svg></Slot>
            <Slot $w={22}><svg width="12" height="11" viewBox="0 0 12 11" fill="#fff" stroke="#444"><path d="M4.500.500h7v6h-7z" /><path d="M6.500 2.500h3v2h-3z" /><path d="M.5 4.500h7v6h-7z" /><path d="M2.500 6.500h3v2h-3z" /></svg></Slot>
            <Slot $w={22}><svg width="11" height="9" viewBox="0 0 11 9"><path d="M.5.500h3l2 2 2-2h3L7.500 4.500l3 4h-3l-2-2-2 2h-3l3-4z" fill="#fff" stroke="#444" /></svg></Slot>
          </TabTools>
        </TabStrip>
      </Frame>
      <RibbonArea />
      <FormulaBar>
        <BarInner>
          <NameBox><span>C20</span><Arrow c="#111" w={7} /></NameBox>
          <FxArea><i /><b>f<sub>x</sub></b></FxArea>
          <FormulaInput />
        </BarInner>
        <ExpandButton><svg width="8" height="5" viewBox="0 0 8 5"><path d="M.5.500L4 4 7.500.500" fill="none" stroke="#44546a" strokeWidth="1.800" /></svg></ExpandButton>
      </FormulaBar>
      <Workspace>
        <Grid />
        <VScroll>
          <SplitBox />
          <ScrollArrow $w={16} $h={16}><Tri d="M4.500 0L9 5H0z" w={9} h={5} /></ScrollArrow>
          <Thumb $vertical><Dotted vertical /></Thumb>
          <ScrollArrow $w={16} $h={21} />
          <ScrollArrow $w={16} $h={15}><Tri d="M0 0h9L4.500 5z" w={9} h={5} /></ScrollArrow>
        </VScroll>
        <EdgeStrip />
      </Workspace>
      <BottomBar>
        <TabNav>
          <Tri d="M0 0h1v7H0zM6 0v7L2 3.500z" w={6} h={7} c="#5a6f90" />
          <Tri d="M4 0v7L0 3.500z" w={4} h={7} c="#5a6f90" />
          <Tri d="M0 0v7l4-3.500z" w={4} h={7} c="#5a6f90" />
          <Tri d="M5 0h1v7H5zM0 0v7l4-3.500z" w={6} h={7} c="#5a6f90" />
        </TabNav>
        <SheetTabs>
          <SheetTab $w={77} $active>ROSARIO</SheetTab>
          <SheetTab $w={52}>Hoja2</SheetTab>
          <SheetTab $w={52}>Hoja3</SheetTab>
          <SheetTab $w={34}><svg width="14" height="12" viewBox="0 0 14 12"><path d="M4.500 2.500h9v6l-2 2.500h-7z" fill="#f7faff" stroke="#46608a" /><path d="M3 0v6M0 3h6M1 1l4 4M5 1L1 5" stroke="#e8972c" /></svg></SheetTab>
        </SheetTabs>
        <HSplit />
        <HScroll>
          <ScrollArrow $w={17} $h={15}><Tri d="M5 0v9L0 4.500z" h={9} /></ScrollArrow>
          <Thumb><Dotted /></Thumb>
          <ScrollArrow $w={39} $h={15} />
          <ScrollArrow $w={14} $h={15}><Tri d="M0 0v9l5-4.500z" h={9} /></ScrollArrow>
        </HScroll>
        <HSplit />
      </BottomBar>
      <StatusBar>
        <StatusText>Listo</StatusText>
        <Divider $h={19} />
        <StatusTools>
          <Slot $w={5}><Divider $h={18} /></Slot>
          <ViewButton $active><svg width="13" height="11" viewBox="0 0 13 11"><path d="M.5.500h12v10H.5zM4.500.500v10M8.500.500v10M.5 4h12M.5 7.500h12" fill="#fff" stroke="#555c68" /></svg></ViewButton>
          <ViewButton><svg width="13" height="12" viewBox="0 0 13 12"><rect x=".5" y=".5" width="12" height="11" fill="#aaa" stroke="#555c68" /><rect x="3" y="2" width="7" height="8" fill="#fff" stroke="#555c68" /><path d="M4.500 4.500h4M4.500 6.500h4M4.500 8h4" stroke="#777" strokeWidth=".8" /></svg></ViewButton>
          <ViewButton><svg width="13" height="12" viewBox="0 0 13 12"><rect x=".5" y=".5" width="12" height="11" fill="#9aa0a8" stroke="#555c68" /><path d="M1.500 1h4v5h-4zM7 1h4v5H7z" fill="#fff" /></svg></ViewButton>
          <ZoomText>100%</ZoomText>
          <svg width="136" height="17" viewBox="0 0 136 17"><path d="M16 8.500h102" stroke="#5e6f8b" /><g fill="#f3f6fa" stroke="#67748a" strokeWidth="1.200"><circle cx="8.500" cy="8.500" r="7.300" /><circle cx="124.500" cy="8.500" r="7.300" /><path d="M63 2h8v7l-4 4.500L63 9z" /></g><path d="M5 8.500h7M121 8.500h7M124.500 5v7" stroke="#444c59" strokeWidth="2" /></svg>
        </StatusTools>
      </StatusBar>
      <Taskbar>
        <TaskItem $w={69}><TaskBlank /><IeIcon /></TaskItem>
        <TaskItem $w={61} $framed $gap={1.500}><FolderIcon /></TaskItem>
        <TaskItem $w={61} $framed $gap={1.500} $wide><FolderIcon />I...</TaskItem>
        <TaskItem $w={61} $framed $gap={1.500}><FolderIcon down /></TaskItem>
        <TaskItem $w={61} $framed $wide><FolderIcon />R...</TaskItem>
        <TaskItem $w={58}><FirefoxIcon /></TaskItem>
        <TaskItem $w={46}><BatIcon /></TaskItem>
        <TaskItem $w={56}><SearchDocIcon /></TaskItem>
        <TaskItem $w={62} $framed $gap={2.600} $wide><ChromeIcon />R...</TaskItem>
        <TaskItem $w={62} $framed $gap={2.600} $wide><SkypeIcon />S...</TaskItem>
        <TaskItem $w={62} $framed $gap={2.600} $wide><MonitorIcon />A...</TaskItem>
        <TaskItem $w={62} $framed $gap={2.600} $wide><SpotifyIcon />S...</TaskItem>
        <TaskItem $w={62} $framed $gap={2.600} $wide><CompassIcon />C...</TaskItem>
        <TaskItem $w={62} $framed $gap={2.600} $wide><ToolsIcon />E...</TaskItem>
        <TaskItem $w={62} $framed $gap={2.600} $wide><ThunderbirdIcon />B...</TaskItem>
        <TaskItem $w={62} $framed $gap={2.600}><WordIcon /></TaskItem>
        <TaskItem $w={62} $framed $gap={2.600} $wide><NitroIcon />L...</TaskItem>
        <TaskItem $w={61} $framed $active><ExcelLogo s={30} /></TaskItem>
        <Tray>
          <TrayIcons />
          <Clock><span>07:36 p. m.</span><span>23/02/2015</span></Clock>
        </Tray>
      </Taskbar>
    </Screen>
  );
}
